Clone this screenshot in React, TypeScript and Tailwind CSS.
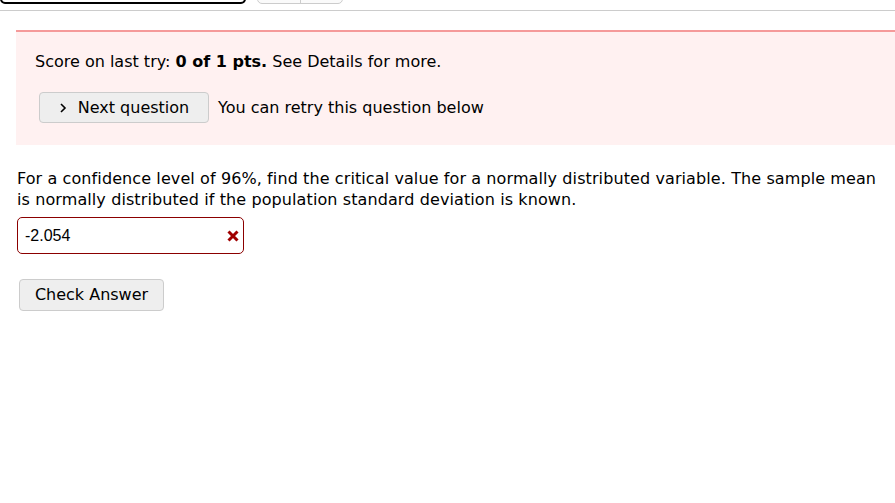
import React from 'react';

export default function App() {
  return (
    <div className="w-[895px] h-[503px] bg-white overflow-hidden text-black font-['DejaVu_Sans',sans-serif]">
      {/* top toolbar, scrolled mostly out of view */}
      <div className="h-[11px] border-b border-[#cccccc] flex items-end pb-[6px]">
        <div className="w-[246px] h-[20px] border-2 border-black rounded-b-[5px] bg-white" />
        <div className="ml-[11px] flex h-[20px] border border-[#cccccc] rounded-b-[5px] bg-[#fafafa]">
          <div className="w-[43px] border-r border-[#cccccc]" />
          <div className="w-[41px]" />
        </div>
      </div>

      {/* score notice */}
      <div className="ml-[16px] mt-[19px] h-[115px] border-t-2 border-[#f59a9a] bg-[#fff1f1] pl-[19px] pt-[19px]">
        <p className="text-[16px] leading-[22px]">
          Score on last try: <b className="font-bold">0 of 1 pts.</b> See Details for more.
        </p>
        <div className="mt-[19px] flex items-center">
          <button className="ml-[4px] h-[31px] w-[170px] rounded-[4px] border border-[#cccccc] bg-[#eeeeee] text-[16px] flex items-center justify-center gap-[11px]">
            <svg width="8" height="12" viewBox="0 0 8 12" fill="none" stroke="black" strokeWidth="1.6">
              <path d="M2 2 L6 6 L2 10" />
            </svg>
            <span>Next question</span>
          </button>
          <span className="ml-[9px] text-[16px]">You can retry this question below</span>
        </div>
      </div>

      {/* question */}
      <div className="pl-[17px] pr-[8px] pt-[23px]">
        <p className="text-[16px] leading-[21px] tracking-[0.1px]">
          For a confidence level of 96%, find the critical value for a normally distributed variable. The sample mean is normally distributed if the population standard deviation is known.
        </p>
        <div className="mt-[7px] w-[227px] h-[37px] border border-[#8b0000] rounded-[5px] flex items-center justify-between pl-[7px] pr-[4px]">
          <span className="font-['Liberation_Sans',Arial,sans-serif] text-[16px]">-2.054</span>
          <svg width="12" height="12" viewBox="0 0 12 12" stroke="#a00000" strokeWidth="3">
            <path d="M1.5 1.5 L10.5 10.5 M10.5 1.5 L1.5 10.5" />
          </svg>
        </div>
        <button className="mt-[25px] ml-[2px] h-[32px] w-[145px] rounded-[4px] border border-[#cccccc] bg-[#eeeeee] text-[16px]">
          Check Answer
        </button>
      </div>
    </div>
  );
}
